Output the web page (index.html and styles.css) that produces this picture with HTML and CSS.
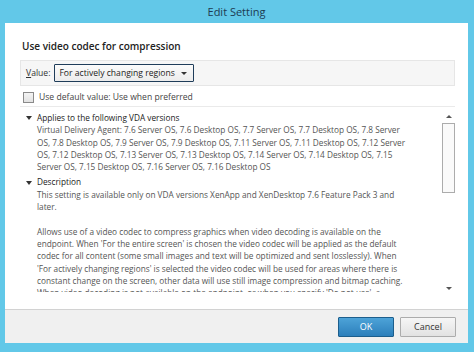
FILE: index.html
```html
<!DOCTYPE html>
<html lang="en">
<head>
  <meta charset="UTF-8">
  <title>Edit Setting</title>
  <link rel="stylesheet" href="styles.css">
</head>
<body>
  <div class="window">
    <div class="titlebar">Edit Setting</div>

    <div class="content">
      <h1>Use video codec for compression</h1>

      <div class="value-row">
        <span class="value-label"><u>V</u>alue:</span>
        <div class="select">
          For actively changing regions
          <span class="caret"></span>
        </div>
      </div>

      <label class="check">
        <span class="box"></span>
        Use default value: Use when preferred
      </label>

      <div class="details">
        <div class="details-text">
          <div class="section-head"><span class="tri"></span>Applies to the following VDA versions</div>
          <p>Virtual Delivery Agent: 7.6 Server OS, 7.6 Desktop OS, 7.7 Server OS, 7.7 Desktop OS, 7.8 Server<br>
          OS, 7.8 Desktop OS, 7.9 Server OS, 7.9 Desktop OS, 7.11 Server OS, 7.11 Desktop OS, 7.12 Server<br>
          OS, 7.12 Desktop OS, 7.13 Server OS, 7.13 Desktop OS, 7.14 Server OS, 7.14 Desktop OS, 7.15<br>
          Server OS, 7.15 Desktop OS, 7.16 Server OS, 7.16 Desktop OS</p>

          <div class="section-head"><span class="tri"></span>Description</div>
          <p class="spaced">This setting is available only on VDA versions XenApp and XenDesktop 7.6 Feature Pack 3 and<br>
          later.</p>
          <p>Allows use of a video codec to compress graphics when video decoding is available on the<br>
          endpoint. When 'For the entire screen' is chosen the video codec will be applied as the default<br>
          codec for all content (some small images and text will be optimized and sent losslessly). When<br>
          'For actively changing regions' is selected the video codec will be used for areas where there is<br>
          constant change on the screen, other data will use still image compression and bitmap caching.<br>
          When video decoding is not available on the endpoint, or when you specify 'Do not use', a</p>
        </div>

        <div class="scrollbar">
          <span class="arrow up"></span>
          <div class="track"><div class="thumb"></div></div>
          <span class="arrow down"></span>
        </div>
      </div>
    </div>

    <div class="footer">
      <button class="btn btn-ok">OK</button>
      <button class="btn">Cancel</button>
    </div>
  </div>
</body>
</html>
```

FILE: styles.css
```css
body {
  margin: 0;
  background-color: #62c8e8;
  font-family: "Open Sans", "Noto Sans", sans-serif;
}

.window {
  width: 474px;
  height: 352px;
  box-sizing: border-box;
  padding: 0 6px 9px 5px;
  display: flex;
  flex-direction: column;
}

.titlebar {
  height: 23px;
  line-height: 23px;
  text-align: center;
  font-size: 11px;
  color: #1d3b52;
}

.content {
  flex: 1;
  background-color: white;
  padding: 15px 13px 0 15px;
  display: flex;
  flex-direction: column;
  overflow: hidden;
}

h1 {
  margin: 0 0 6px 2px;
  font-size: 10px;
  font-weight: 600;
  line-height: 16px;
  color: #222;
}

.value-row {
  display: flex;
  align-items: center;
  gap: 4px;
  height: 24px;
  padding-left: 5px;
  background-color: #f6f6f6;
  border: 1px solid #e6e6e6;
  font-size: 8.6px;
  color: #333;
}

.select {
  display: flex;
  align-items: center;
  gap: 6px;
  height: 16px;
  padding: 0 6px 0 4px;
  background: linear-gradient(#fbfbfb, #ececec);
  border: 1px solid #1f3d5a;
  border-radius: 1px;
  color: #222;
}

.caret {
  width: 0;
  height: 0;
  border-left: 3px solid transparent;
  border-right: 3px solid transparent;
  border-top: 3px solid #333;
}

.check {
  display: flex;
  align-items: center;
  gap: 5px;
  height: 18px;
  margin-top: 2px;
  padding-left: 3px;
  font-size: 8.6px;
  color: #444;
  border-bottom: 1px solid #eaeaea;
}

.box {
  width: 9px;
  height: 9px;
  border: 1px solid #8a8a8a;
  background: linear-gradient(#f4f4f4, #e2e2e2);
}

.details {
  display: flex;
  margin-top: 1px;
  height: 189px;
  overflow: hidden;
}

.details-text {
  flex: 1;
  margin-bottom: 5px;
  padding: 4px 0 0 6px;
  font-size: 8.25px;
  line-height: 12.3px;
  color: #555;
  overflow: hidden;
}

.section-head {
  display: flex;
  align-items: center;
  gap: 5px;
  color: #222;
}

.tri {
  width: 0;
  height: 0;
  border-left: 3px solid transparent;
  border-right: 3px solid transparent;
  border-top: 4px solid #333;
}

.details-text p {
  margin: 0 0 3px 11px;
  white-space: nowrap;
}

.details-text p.spaced {
  margin-bottom: 12.3px;
}

.scrollbar {
  width: 13px;
  display: flex;
  flex-direction: column;
  align-items: center;
  padding: 2px 0;
}

.arrow {
  width: 0;
  height: 0;
  margin: 5px 0;
  border-left: 3px solid transparent;
  border-right: 3px solid transparent;
}

.arrow.up {
  border-bottom: 3px solid #555;
}

.arrow.down {
  border-top: 3px solid #555;
}

.track {
  flex: 1;
  width: 100%;
}

.thumb {
  height: 70px;
  box-sizing: border-box;
  border: 1px solid #acacac;
  background-color: #fafafa;
}

.footer {
  height: 33px;
  background-color: #f0f0f0;
  border-top: 1px solid #d2d2d2;
  display: flex;
  justify-content: flex-end;
  align-items: center;
  gap: 6px;
  padding-right: 12px;
}

.btn {
  width: 56px;
  height: 20px;
  font-family: inherit;
  font-size: 9px;
  color: #333;
  background: linear-gradient(#f6f6f6, #e2e2e2);
  border: 1px solid #acacac;
  border-radius: 1px;
}

.btn-ok {
  color: white;
  background: linear-gradient(#4da3d8, #2c7fbb);
  border-color: #1c5e8c;
}
```
